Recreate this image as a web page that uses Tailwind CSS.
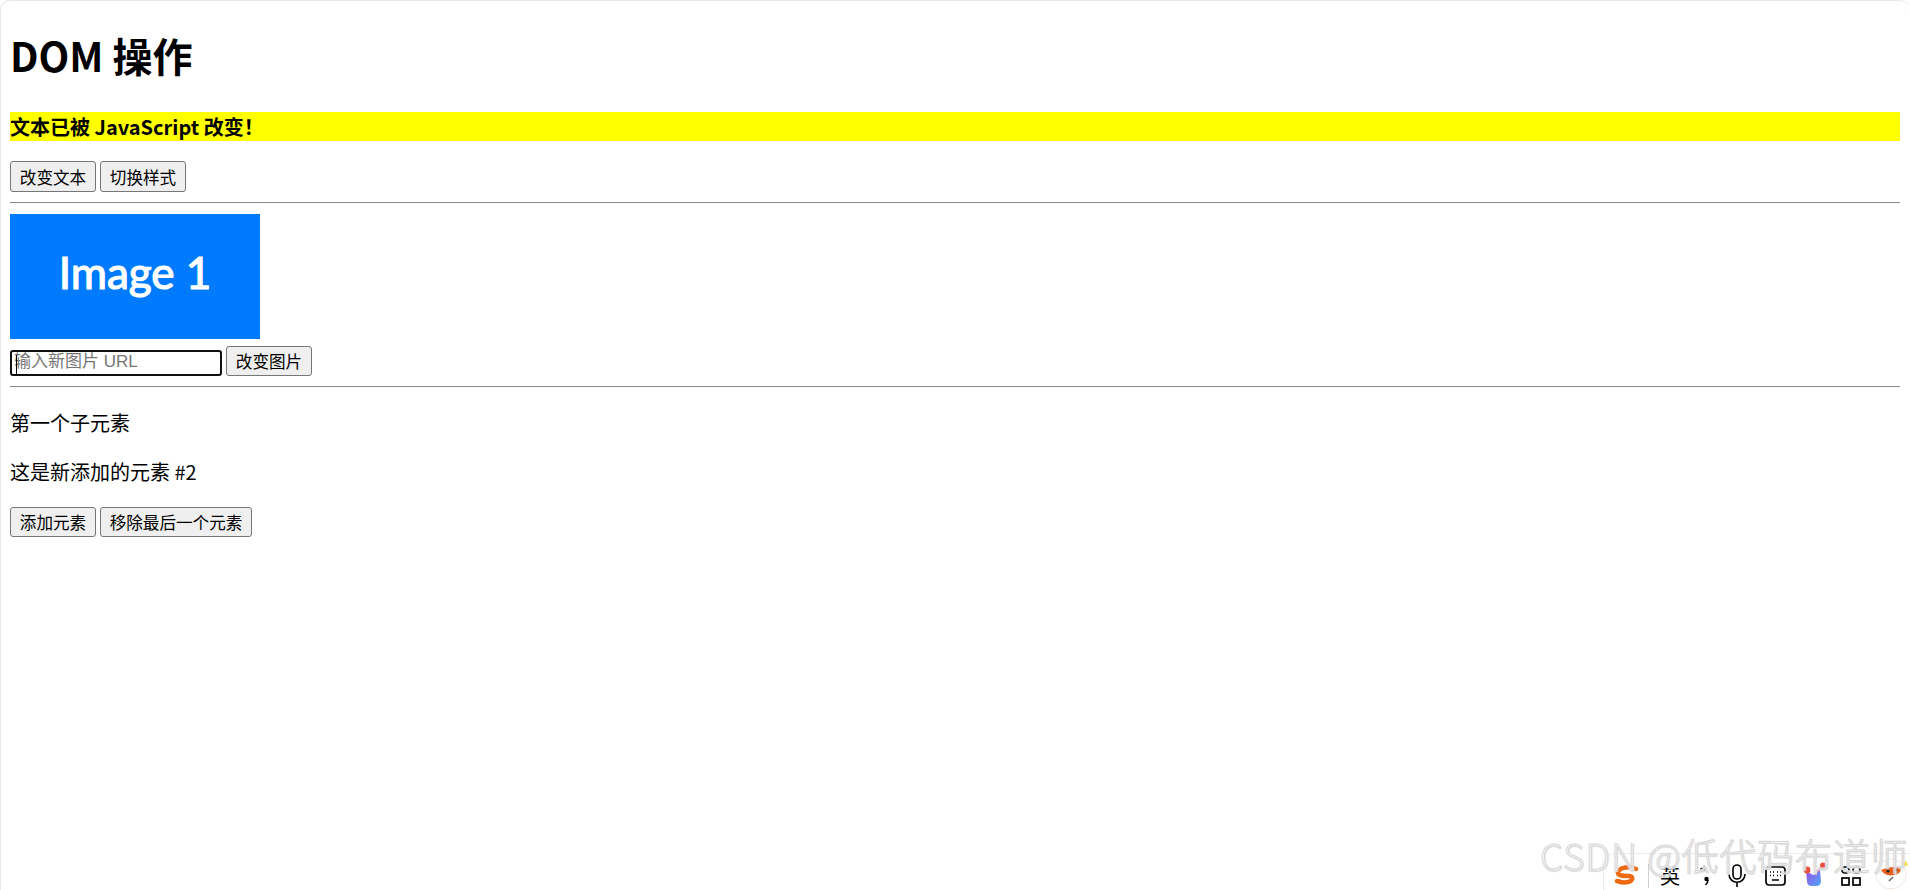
<!DOCTYPE html>
<html lang="zh-CN">
<head>
    <meta charset="UTF-8">
    <title>DOM 操作</title>
    <script src="https://cdn.jsdelivr.net/npm/@tailwindcss/browser@4"></script>
</head>
<body class="relative h-[890px] overflow-hidden bg-white text-black font-['Noto_Sans_CJK_SC',sans-serif]">
    <div class="h-[890px] pr-[10px] pl-[9px] rounded-tl-[10px] rounded-tr-[10px] border-t border-l border-[#e8e8e8]">
        <h1 class="pt-[27px] text-[40px] leading-[54px] font-bold">DOM 操作</h1>

        <p class="mt-[30px] h-[29px] bg-[#ffff00] text-[20px] leading-[29px] font-bold">文本已被 JavaScript 改变！</p>

        <div class="mt-[20px] flex gap-[4px]">
            <button class="h-[31px] w-[86px] rounded-[3px] border border-[#767676] bg-[#efefef] text-[16.6px] leading-[28px]">改变文本</button>
            <button class="h-[31px] w-[86px] rounded-[3px] border border-[#767676] bg-[#efefef] text-[16.6px] leading-[28px]">切换样式</button>
        </div>

        <hr class="mt-[10px] border-t border-b border-t-[#8c8c8c] border-b-[#fafafa]">

        <div class="mt-[10px] flex h-[125px] w-[250px] items-center justify-center bg-[#007bff] pb-[10px] font-['Lato',sans-serif] text-[44px] font-normal text-white [-webkit-text-stroke:1.2px_white]">Image 1</div>

        <div class="mt-[7px] flex items-end gap-[4px]">
            <div class="relative h-[26px] w-[212px] rounded-[3px] border-2 border-[#101010] bg-white">
                <span class="absolute top-[3px] left-[4px] h-[19px] w-px bg-black"></span>
                <input class="block h-[20px] w-full pl-[2px] font-['Liberation_Sans','Noto_Sans_CJK_SC',sans-serif] text-[17px] leading-[20px] outline-none placeholder:text-[#757575]" placeholder="输入新图片 URL">
            </div>
            <button class="h-[30px] w-[86px] rounded-[3px] border border-[#767676] bg-[#efefef] text-[16.6px] leading-[28px]">改变图片</button>
        </div>

        <hr class="mt-[10px] border-t border-b border-t-[#8c8c8c] border-b-[#fafafa]">

        <p class="mt-[20px] text-[20px] leading-[29px]">第一个子元素</p>
        <p class="mt-[20px] text-[20px] leading-[29px]">这是新添加的元素 #2</p>

        <div class="mt-[21px] flex gap-[4px]">
            <button class="h-[30px] w-[86px] rounded-[3px] border border-[#767676] bg-[#efefef] text-[16.6px] leading-[28px]">添加元素</button>
            <button class="h-[30px] w-[152px] rounded-[3px] border border-[#767676] bg-[#efefef] text-[16.6px] leading-[28px]">移除最后一个元素</button>
        </div>
    </div>

    <!-- input method bar -->
    <div class="absolute top-[853px] left-[1603px] flex h-[50px] w-[320px] items-start rounded-tl-[12px] border border-[#ececec] bg-white pt-[10px] pl-[10px]">
        <svg class="h-[24px] w-[25px]" viewBox="0 0 25 24"><path d="M22 5 C16 2 6 3 4 8 C3 12 10 12 15 12 C20 12 19 17 14 18 C10 19 6 18 3 17" fill="none" stroke="#ee6a12" stroke-width="4.5" stroke-linecap="round"/></svg>
        <span class="ml-[9px] h-[24px] w-px bg-[#cfcfcf]"></span>
        <span class="ml-[11px] w-[20px] text-[20px] leading-[24px]">英</span>
        <svg class="ml-[18px] h-[24px] w-[13px]" viewBox="0 0 12 24"><circle cx="3" cy="5" r="1.5" fill="#444"/><path d="M5 2 L7 5 L4 8" fill="none" stroke="#666" stroke-width="1.4"/><circle cx="8" cy="15" r="2.2" fill="#000"/><path d="M9.5 16 Q9.5 19 7 21" fill="none" stroke="#000" stroke-width="1.5"/></svg>
        <svg class="ml-[17px] h-[24px] w-[18px]" viewBox="0 0 18 24" fill="none" stroke="#000" stroke-width="1.6"><rect x="5" y="1" width="8" height="14" rx="4"/><path d="M1 10 C1 21 17 21 17 10 M9 18 V23"/></svg>
        <svg class="ml-[19px] h-[24px] w-[21px]" viewBox="0 0 21 24" fill="none" stroke="#000" stroke-width="1.7"><rect x="1" y="3" width="19" height="18" rx="3"/><path d="M5 8 H6 M8 8 H9 M12 8 H13 M15 8 H16 M5 11.5 H6 M8 11.5 H9 M12 11.5 H13 M15 11.5 H16 M7 16 H14"/></svg>
        <svg class="ml-[17px] -mt-[2px] h-[26px] w-[24px]" viewBox="0 0 24 26"><defs><linearGradient id="cup" x1="0" y1="0" x2="1" y2="1"><stop offset="0" stop-color="#a04be8"/><stop offset="1" stop-color="#4aa8f5"/></linearGradient></defs><path d="M3 9 L10 13 L17 8 L18 19 Q18 24 13 24 L9 24 Q4 24 4 19 Z" fill="url(#cup)"/><circle cx="4" cy="8" r="3.4" fill="#e8503a"/><circle cx="20" cy="3.5" r="3" fill="#e8503a"/><path d="M12 12 L18 5" stroke="#e8a0a0" stroke-width="1.5"/></svg>
        <svg class="ml-[14px] h-[24px] w-[20px]" viewBox="0 0 20 24" fill="none" stroke="#000" stroke-width="1.7"><rect x="1" y="14" width="7" height="7"/><rect x="12" y="14" width="7" height="7"/><path d="M1 6 Q1 3 4 3 L5 3 Q8 3 8 6 Q8 9 5 9 L4 9 Q1 9 1 6 Z M12 6 Q12 3 15 3 L16 3 Q19 3 19 6 Q19 9 16 9 L15 9 Q12 9 12 6 Z"/></svg>
    </div>
    <!-- avatar, overlaps the end of the bar -->
    <svg class="absolute top-[856px] left-[1876px] h-[34px] w-[34px]" viewBox="0 0 34 34"><circle cx="15" cy="18" r="15" fill="#fff" stroke="#f2e6e0"/><path d="M5 14 Q14 9 25 12 Q25 18 18 19 Q9 21 5 14 Z" fill="#e8611c"/><circle cx="12" cy="15" r="1.6" fill="#222"/><circle cx="20" cy="14" r="1.6" fill="#222"/><path d="M13 25 L17 21" stroke="#666" stroke-width="1.4"/><path d="M30 5 L32 9 L28 11 L26 7 Z" fill="#f7dc3c"/></svg>

    <div class="absolute top-[831px] left-[1540px] font-['Noto_Sans_CJK_SC',sans-serif] text-[37px] leading-[48px] font-light tracking-[0.8px] whitespace-nowrap text-white/50 [-webkit-text-stroke:1px_#d6d6d6] [text-shadow:1px_1px_1px_#e6e6e6]">CSDN @低代码布道师</div>
</body>
</html>
